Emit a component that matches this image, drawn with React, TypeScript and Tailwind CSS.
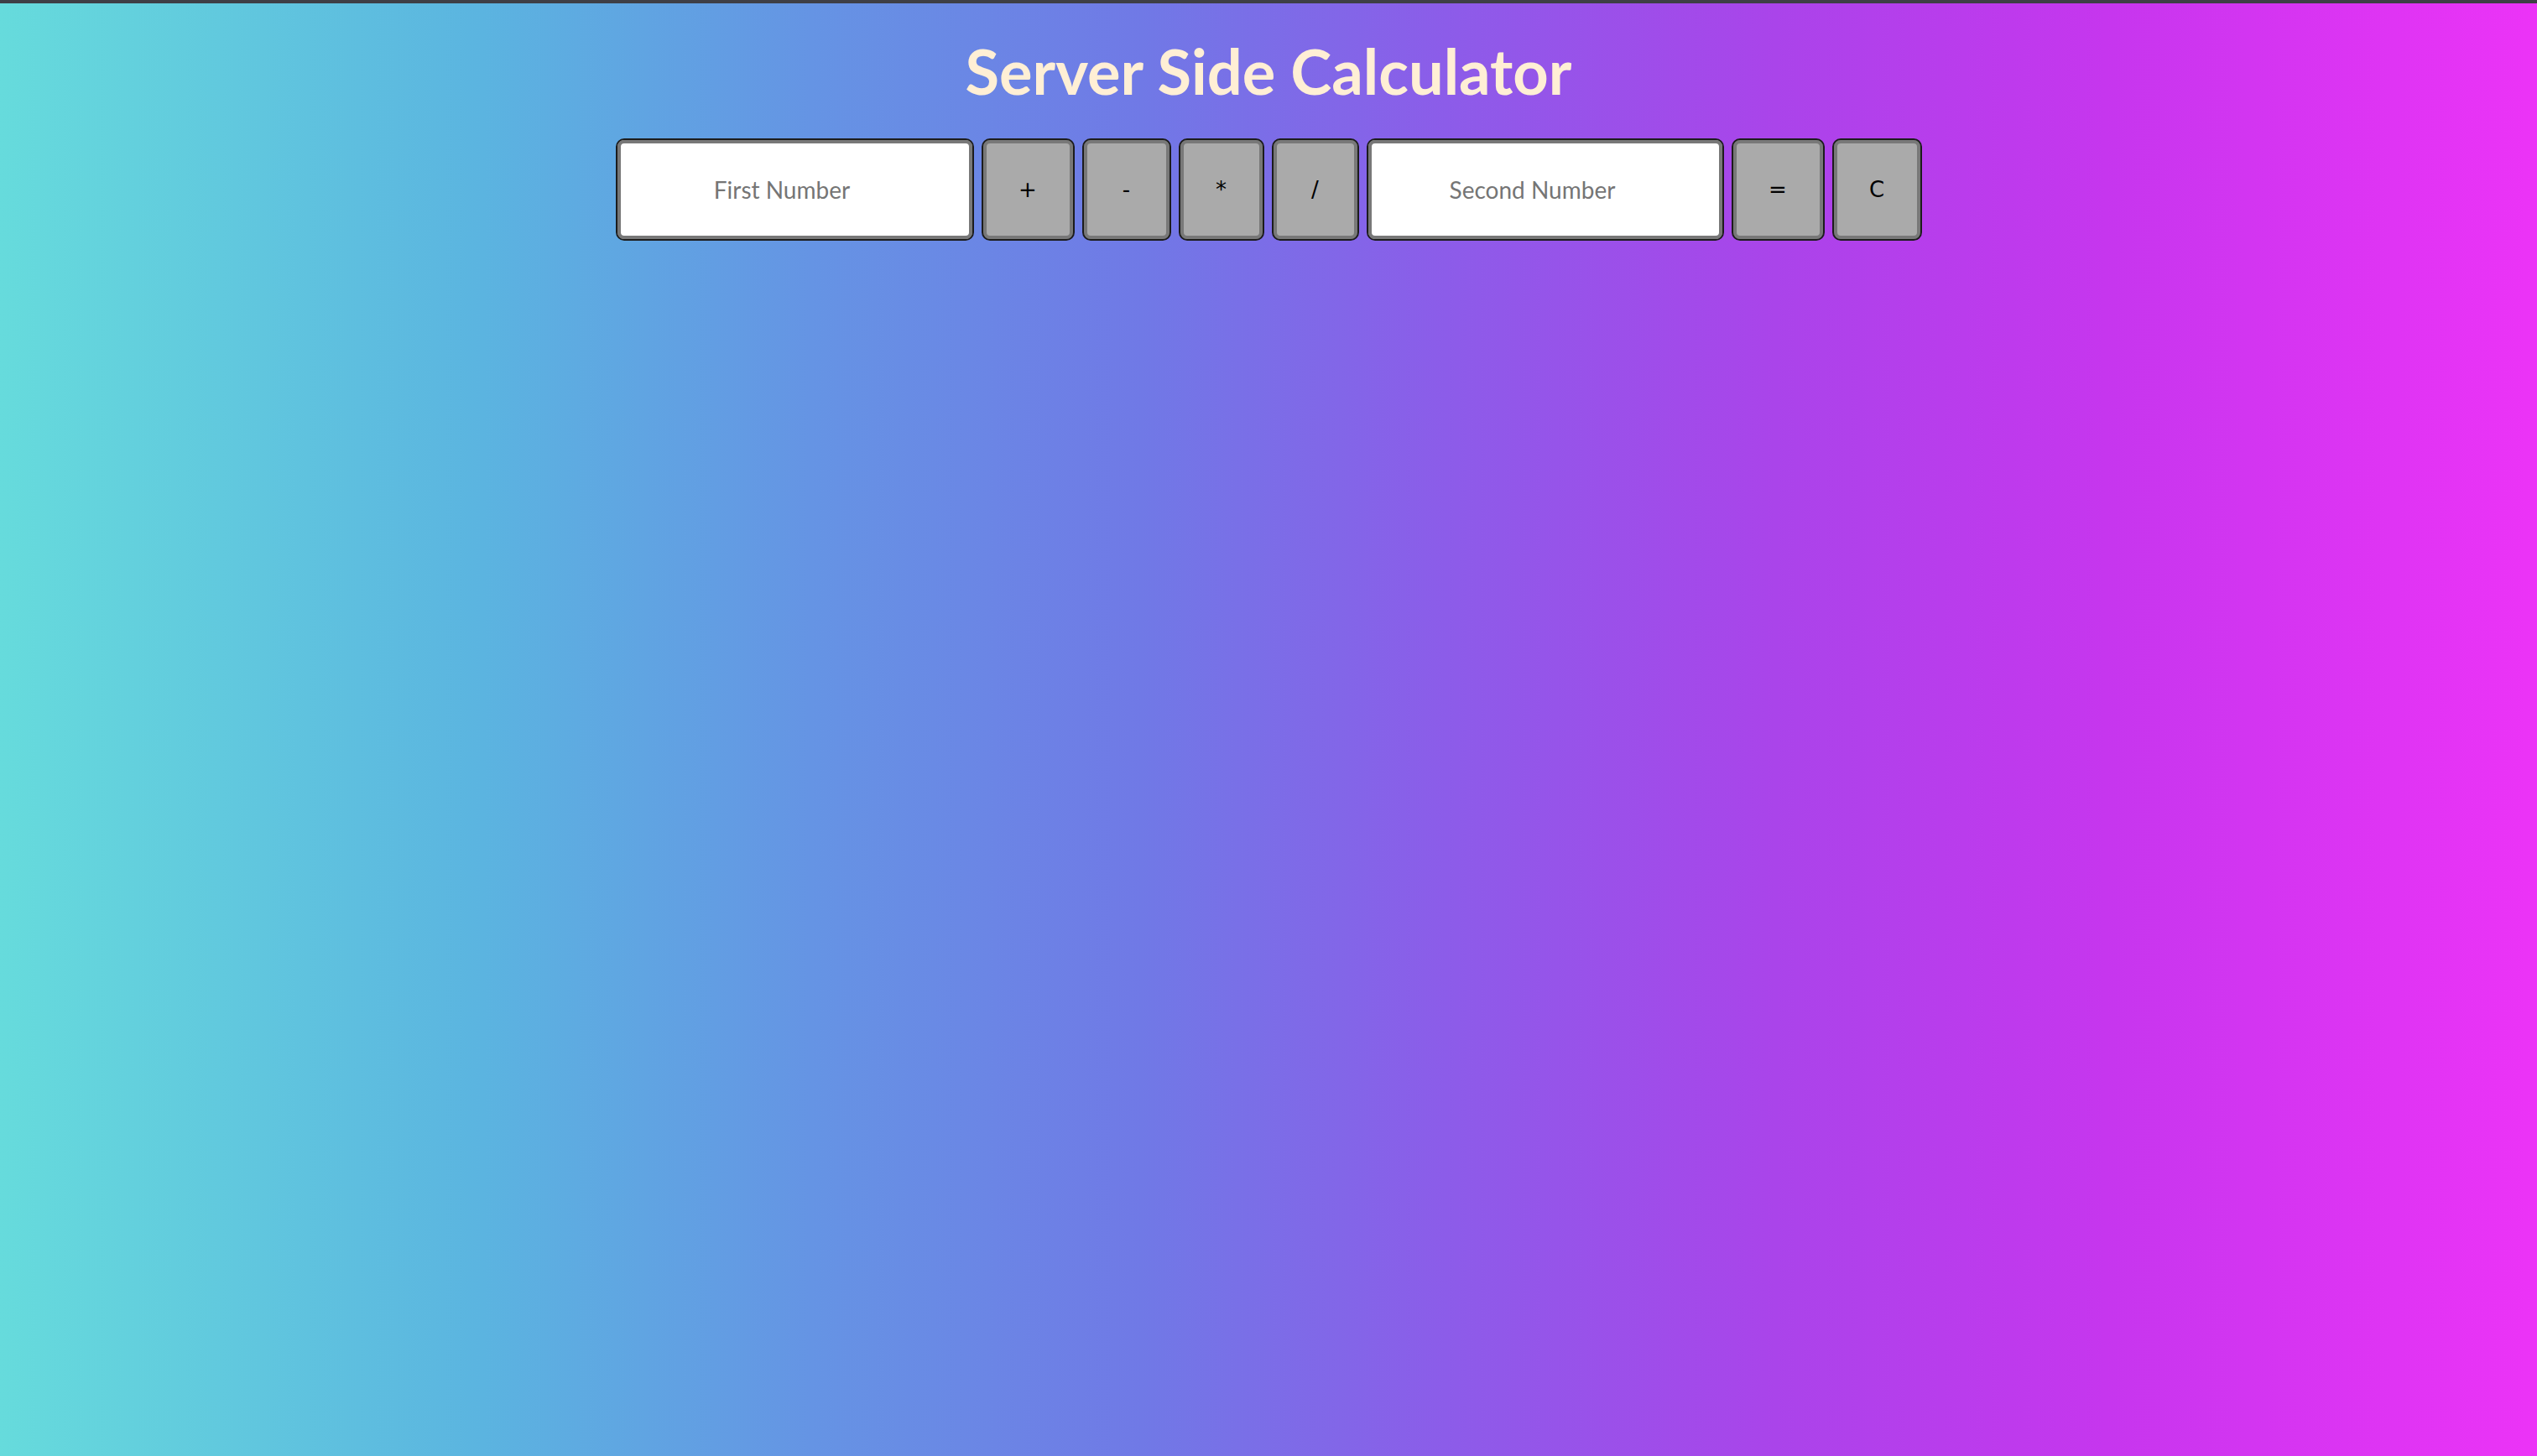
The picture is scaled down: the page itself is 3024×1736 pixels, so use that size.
import React, { useState } from 'react';

const ops = [
  { label: '+', w: 'w-[111px]' },
  { label: '-', w: 'w-[106px]' },
  { label: '*', w: 'w-[102px]' },
  { label: '/', w: 'w-[104px]' },
];

const keyClass =
  'h-[122px] rounded-[10px] border-2 border-[#1c1c1c] bg-[#aaaaaa] shadow-[inset_0_0_0_4px_#787878] text-[26px] text-black font-["DejaVu_Sans",sans-serif] flex items-center justify-center';

const inputClass =
  'h-[122px] rounded-[10px] border-2 border-[#1c1c1c] bg-white shadow-[inset_0_0_0_4px_#787878] text-center pr-[30px] text-[28px] text-[#222] placeholder:text-[#757575] font-["Lato",sans-serif] outline-none';

export default function App() {
  const [first, setFirst] = useState('');
  const [second, setSecond] = useState('');

  return (
    <div className="min-h-screen w-full border-t-4 border-[#3e3f46] bg-[linear-gradient(to_right,#66dbdc_0%,#5bb4e0_19%,#6594e4_32%,#7079e6_45%,#8c5ce9_57%,#aa44ea_70%,#c636ee_83%,#ec33f7_100%)]">
      {/* Title */}
      <h1 className='pt-[41px] text-center text-[74px] leading-[80px] font-bold text-[#ffefd5] font-["Lato",sans-serif]'>
        Server Side Calculator
      </h1>

      {/* Calculator row */}
      <div className="mt-[40px] flex justify-center gap-[9px]">
        <input
          type="text"
          placeholder="First Number"
          value={first}
          onChange={(e) => setFirst(e.target.value)}
          className={`${inputClass} w-[427px]`}
        />
        {ops.map((op) => (
          <button key={op.label} className={`${keyClass} ${op.w}`}>
            {op.label}
          </button>
        ))}
        <input
          type="text"
          placeholder="Second Number"
          value={second}
          onChange={(e) => setSecond(e.target.value)}
          className={`${inputClass} w-[426px]`}
        />
        <button className={`${keyClass} w-[111px]`}>=</button>
        <button className={`${keyClass} w-[107px]`} onClick={() => { setFirst(''); setSecond(''); }}>
          C
        </button>
      </div>
    </div>
  );
}
